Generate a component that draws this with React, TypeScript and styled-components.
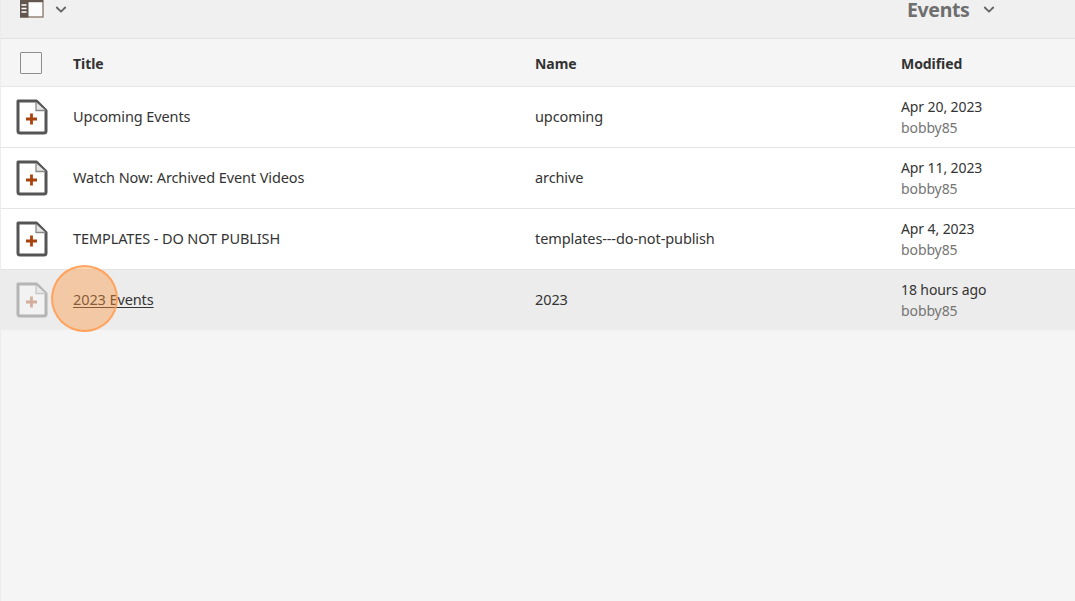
import React from "react";
import styled, { createGlobalStyle } from "styled-components";

const Global = createGlobalStyle`
  html, body { margin: 0; padding: 0; height: 100%; background: #f5f5f5; overflow: hidden; }
  #root { height: 100%; }
`;

const Page = styled.div`
  position: relative;
  width: 1075px;
  height: 601px;
  overflow: hidden;
  background: #f5f5f5;
  border-left: 1px solid #ececec;
  box-sizing: border-box;
  font-family: "Noto Sans", "Open Sans", sans-serif;
  color: #2c2c2c;
`;

const Toolbar = styled.div`
  display: flex;
  align-items: flex-start;
  height: 38px;
  box-sizing: content-box;
  background: #f0f0f0;
  border-bottom: 1px solid #e1e1e1;
  margin-left: -1px;
`;

const RailButton = styled.div`
  display: flex;
  align-items: flex-start;
  gap: 11px;
  padding-left: 20px;
  flex: 1;
`;

const Crumb = styled.div`
  display: flex;
  align-items: center;
  gap: 13px;
  width: 168px;
  font-size: 19.5px;
  line-height: 20px;
  font-weight: 700;
  color: #6e6e6e;
  letter-spacing: -0.35px;
`;

const Grid = styled.div`
  display: grid;
  grid-template-columns: 72px 462px 366px 1fr;
  align-items: center;
`;

const HeadRow = styled(Grid)`
  height: 46px;
  padding-top: 1px;
  border-bottom: 1px solid #e6e6e6;
  font-size: 14px;
  font-weight: 700;
  color: #323232;
  letter-spacing: -0.06px;
`;

const CheckBox = styled.span`
  display: block;
  width: 20px;
  height: 20px;
  margin-left: 19px;
  border: 1px solid #8e8e8e;
  border-radius: 1px;
  background: #f7f7f7;
`;

const Row = styled(Grid)<{ $active?: boolean }>`
  height: 58px;
  padding-bottom: 2px;
  background: ${(p) => (p.$active ? "#ececec" : "#ffffff")};
  border-bottom: 1px solid ${(p) => (p.$active ? "#f5f5f5" : "#e4e4e4")};
  font-size: 14.5px;
  color: #343434;
  letter-spacing: -0.1px;
`;

const IconCell = styled.div<{ $dim?: boolean }>`
  display: flex;
  padding-left: 15px;
  margin-top: 2px;
  opacity: ${(p) => (p.$dim ? 0.36 : 1)};
  svg { filter: blur(0.5px); }
`;

const Title = styled.span<{ $link?: boolean }>`
  text-decoration: ${(p) => (p.$link ? "underline" : "none")};
  text-underline-offset: 2px;
  text-decoration-thickness: 1px;
`;

const Modified = styled.div`
  display: flex;
  flex-direction: column;
  margin-top: 2px;
  font-size: 14px;
  line-height: 21px;
`;

const By = styled.span`
  color: #757575;
`;

const ClickMark = styled.div`
  position: absolute;
  left: 50px;
  top: 265px;
  width: 67px;
  height: 67px;
  box-sizing: border-box;
  border-radius: 50%;
  background: rgba(255, 150, 60, 0.4);
  border: 2px solid rgba(255, 160, 90, 0.95);
  pointer-events: none;
`;

const PageIcon = () => (
  <svg width="32" height="36" viewBox="0 0 32 36" fill="none">
    <path d="M2 2H20.5L30 11.5V32a2 2 0 0 1-2 2H4a2 2 0 0 1-2-2z" fill="#fff" stroke="#555" strokeWidth="3" strokeLinejoin="round" />
    <path d="M20 3v8.5H29.5" fill="#e6e6e6" stroke="#888" strokeWidth="1.3" />
    <path d="M15.5 14.5v11M10 20h11" stroke="#a8420f" strokeWidth="2.8" />
  </svg>
);

const PanelIcon = () => (
  <svg width="24" height="18" viewBox="0 0 24 18" style={{ display: "block" }}>
    <rect x="0.5" y="-1" width="22.5" height="18" fill="#fbfbfb" stroke="#7a6a5c" strokeWidth="1.2" />
    <rect x="0" y="0" width="8.5" height="17.5" fill="#62564f" />
    <rect x="0" y="0" width="23" height="2.2" fill="#62564f" />
    <path d="M1.5 5h5M1.5 8.5h5M1.5 12h5" stroke="#fff" strokeWidth="1.3" />
  </svg>
);

const Chevron = () => (
  <svg width="12" height="8" viewBox="0 0 12 8" fill="none" style={{ display: "block", flexShrink: 0 }}>
    <path d="M1.8 1.5 6 5.7l4.2-4.2" stroke="#666" strokeWidth="1.8" strokeLinecap="round" strokeLinejoin="round" />
  </svg>
);

const ChevronSlot = styled.span`
  display: flex;
  padding-top: 6px;
`;

const rows = [
  { title: "Upcoming Events", name: "upcoming", date: "Apr 20, 2023" },
  { title: "Watch Now: Archived Event Videos", name: "archive", date: "Apr 11, 2023" },
  { title: "TEMPLATES - DO NOT PUBLISH", name: "templates---do-not-publish", date: "Apr 4, 2023" },
  { title: "2023 Events", name: "2023", date: "18 hours ago", active: true },
];

export default function App() {
  return (
    <Page>
      <Global />
      <Toolbar>
        <RailButton>
          <PanelIcon />
          <ChevronSlot><Chevron /></ChevronSlot>
        </RailButton>
        <Crumb>
          Events
          <Chevron />
        </Crumb>
      </Toolbar>
      <HeadRow>
        <CheckBox />
        <span>Title</span>
        <span>Name</span>
        <span>Modified</span>
      </HeadRow>
      {rows.map((r) => (
        <Row key={r.name} $active={r.active}>
          <IconCell $dim={r.active}><PageIcon /></IconCell>
          <Title $link={r.active}>{r.title}</Title>
          <span>{r.name}</span>
          <Modified>
            <span>{r.date}</span>
            <By>bobby85</By>
          </Modified>
        </Row>
      ))}
      <ClickMark />
    </Page>
  );
}
